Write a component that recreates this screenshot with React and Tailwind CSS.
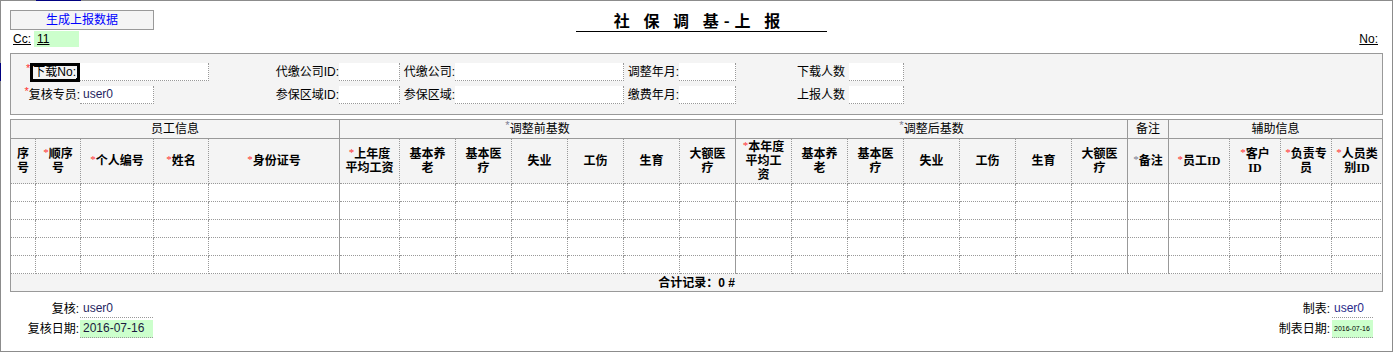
const widths = [25, 45, 73, 55, 131, 60, 56, 56, 56, 56, 56, 56, 56, 56, 56, 56, 56, 56, 56, 41, 61, 51, 51, 51]
const solid = new Set([4, 11, 18, 19, 23])

const before = [
  { t: ['基本养', '老'] },
  { t: ['基本医', '疗'] },
  { t: ['失业'] },
  { t: ['工伤'] },
  { t: ['生育'] },
  { t: ['大额医', '疗'] },
]

const heads = [
  { t: ['序', '号'] },
  { s: 1, t: ['顺序', '号'] },
  { s: 1, t: ['个人编号'] },
  { s: 1, t: ['姓名'] },
  { s: 1, t: ['身份证号'] },
  { s: 1, t: ['上年度', '平均工资'] },
  ...before,
  { s: 1, t: ['本年度', '平均工', '资'] },
  ...before,
  { s: 2, t: ['备注'] },
  { s: 1, t: ['员工ID'] },
  { s: 1, t: ['客户', 'ID'] },
  { s: 1, t: ['负责专', '员'] },
  { s: 1, t: ['人员类', '别ID'] },
]

function Star({ gray }) {
  return (
    <span className={gray ? 'text-[#7a7a90] text-[11px] leading-[10px] font-normal align-top' : 'text-[#ff3030] text-[11px] leading-[10px] font-normal align-top'}>*</span>
  )
}

function Field({ w, value }) {
  return (
    <div className={`${w} h-[18px] bg-white border-r border-b border-dotted border-[#999] pl-[3px] leading-[17px] text-[#1f1f5f]`}>
      {value}
    </div>
  )
}

function Label({ w, children }) {
  return <div className={`${w} h-[18px] leading-[18px] text-right whitespace-nowrap`}>{children}</div>
}

function cellCls(i) {
  return solid.has(i)
    ? 'border-r border-b border-[#999] border-dotted [border-right-style:solid]'
    : 'border-r border-b border-[#999] border-dotted'
}

export default function App() {
  return (
    <div className="relative w-[1393px] h-[352px] border border-[#8c8c8c] bg-white text-[12px] text-black font-['Liberation_Sans','Noto_Sans_CJK_SC',sans-serif]">
      {/* focus marks on the frame */}
      <div className="absolute left-[35px] -top-px w-[45px] h-px bg-[#000080]" />
      <div className="absolute -left-px top-[62px] w-px h-[18px] bg-[#000080]" />

      <div className="flex items-start">
        <button className="ml-[9px] mt-[9px] w-[144px] h-[20px] border border-[#999] bg-[#f4f4f4] text-[#0000ff] text-[12px] leading-[18px]">
          生成上报数据
        </button>
        <div className="ml-[422px] mt-[9px] w-[251px] h-[22px] border-b border-black pr-[4px] text-center font-bold text-[16px] leading-[20px] tracking-[5px] font-['Noto_Sans_CJK_SC',sans-serif]">
          社 保 调 基-上 报
        </div>
      </div>

      <div className="-mt-px flex items-center justify-between h-[16px]">
        <div className="flex items-center">
          <span className="ml-[12px] underline leading-[16px]">Cc:</span>
          <span className="ml-[3px] w-[45px] h-[16px] bg-[#ccffcc] pl-[3px] leading-[16px] underline">11</span>
        </div>
        <span className="mr-[14px] underline leading-[16px]">No:</span>
      </div>

      <div className="ml-[9px] mt-[6px] w-[1373px] h-[62px] border border-[#999] bg-[#f4f4f4] pt-[9px]">
        <div className="flex h-[18px]">
          <div className="w-[69px] h-[18px] flex justify-end items-start">
            <Star />
            <span className="relative h-[19px] border-[3px] border-black leading-[12px] pr-px whitespace-nowrap">
              下载No:
              <span className="absolute -right-[3px] -bottom-[3px] w-[4px] h-[4px] bg-black" />
            </span>
          </div>
          <Field w="w-[129px]" />
          <Label w="w-[130px]">代缴公司ID:</Label>
          <Field w="w-[61px]" />
          <Label w="w-[55px]">代缴公司:</Label>
          <Field w="w-[169px]" />
          <Label w="w-[55px]">调整年月:</Label>
          <Field w="w-[57px]" />
          <Label w="w-[113px]"><span className="pr-[4px]">下载人数</span></Label>
          <Field w="w-[55px]" />
        </div>
        <div className="flex h-[18px] mt-[5px]">
          <Label w="w-[69px]"><Star />复核专员:</Label>
          <div className="w-[129px]">
            <Field w="w-[74px]" value="user0" />
          </div>
          <Label w="w-[130px]">参保区域ID:</Label>
          <Field w="w-[61px]" />
          <Label w="w-[55px]">参保区域:</Label>
          <Field w="w-[169px]" />
          <Label w="w-[55px]">缴费年月:</Label>
          <Field w="w-[57px]" />
          <Label w="w-[113px]"><span className="pr-[4px]">上报人数</span></Label>
          <Field w="w-[55px]" />
        </div>
      </div>

      <div className="ml-[9px] mt-[4px] w-[1373px] grid grid-cols-[25px_45px_73px_55px_131px_60px_repeat(13,56px)_41px_61px_repeat(3,51px)] border-l border-t border-[#999] bg-white">
        <div className="col-span-5 h-[19px] border-r border-b border-[#999] bg-[#f4f4f4] flex items-center justify-center">员工信息</div>
        <div className="col-span-7 h-[19px] border-r border-b border-[#999] bg-[#f4f4f4] flex items-center justify-center"><span><Star gray />调整前基数</span></div>
        <div className="col-span-7 h-[19px] border-r border-b border-[#999] bg-[#f4f4f4] flex items-center justify-center"><span><Star gray />调整后基数</span></div>
        <div className="h-[19px] border-r border-b border-[#999] bg-[#f4f4f4] flex items-center justify-center">备注</div>
        <div className="col-span-4 h-[19px] border-r border-b border-[#999] bg-[#f4f4f4] flex items-center justify-center">辅助信息</div>

        {heads.map((h, i) => (
          <div key={'h' + i} className={`${cellCls(i)} h-[45px] bg-[#f4f4f4] flex items-center justify-center text-center font-bold leading-[14px] font-['Liberation_Serif','Noto_Sans_CJK_SC',serif]`}>
            <div>
              {h.t.map((line, j) => (
                <div key={j} className="whitespace-nowrap">
                  {j === 0 && h.s ? <Star gray={h.s === 2} /> : null}
                  {line}
                </div>
              ))}
            </div>
          </div>
        ))}

        {[0, 1, 2, 3, 4].map((r) =>
          widths.map((_, i) => <div key={r + '-' + i} className={`${cellCls(i)} h-[18px]`} />)
        )}

        <div className="col-span-24 h-[18px] border-r border-b border-[#999] bg-[#f4f4f4] flex items-center justify-center font-bold">
          合计记录：0 #
        </div>
      </div>

      <div className="mt-[8px] flex justify-between">
        <div>
          <div className="flex h-[18px]">
            <div className="w-[79px] text-right leading-[18px] pr-px">复核:</div>
            <div className="w-[73px] border-b border-dotted border-[#999] pl-[3px] leading-[17px] text-[#1f1f5f]">user0</div>
          </div>
          <div className="flex h-[18px] mt-[2px]">
            <div className="w-[79px] text-right leading-[18px] pr-px">复核日期:</div>
            <div className="w-[73px] bg-[#ccffcc] border-b border-dotted border-[#999] pl-[3px] leading-[17px] text-[#1a1a40]">2016-07-16</div>
          </div>
        </div>
        <div className="pr-[19px]">
          <div className="flex h-[18px] justify-end">
            <div className="text-right leading-[18px] pr-[2px]">制表:</div>
            <div className="w-[41px] border-b border-dotted border-[#999] pl-[2px] leading-[17px] text-[#2a2a8a]">user0</div>
          </div>
          <div className="flex h-[18px] mt-[2px] justify-end">
            <div className="text-right leading-[18px] pr-[2px]">制表日期:</div>
            <div className="w-[41px] bg-[#ccffcc] border-b border-dotted border-[#999] pl-[2px] leading-[17px] text-[7px]">2016-07-16</div>
          </div>
        </div>
      </div>
    </div>
  )
}
